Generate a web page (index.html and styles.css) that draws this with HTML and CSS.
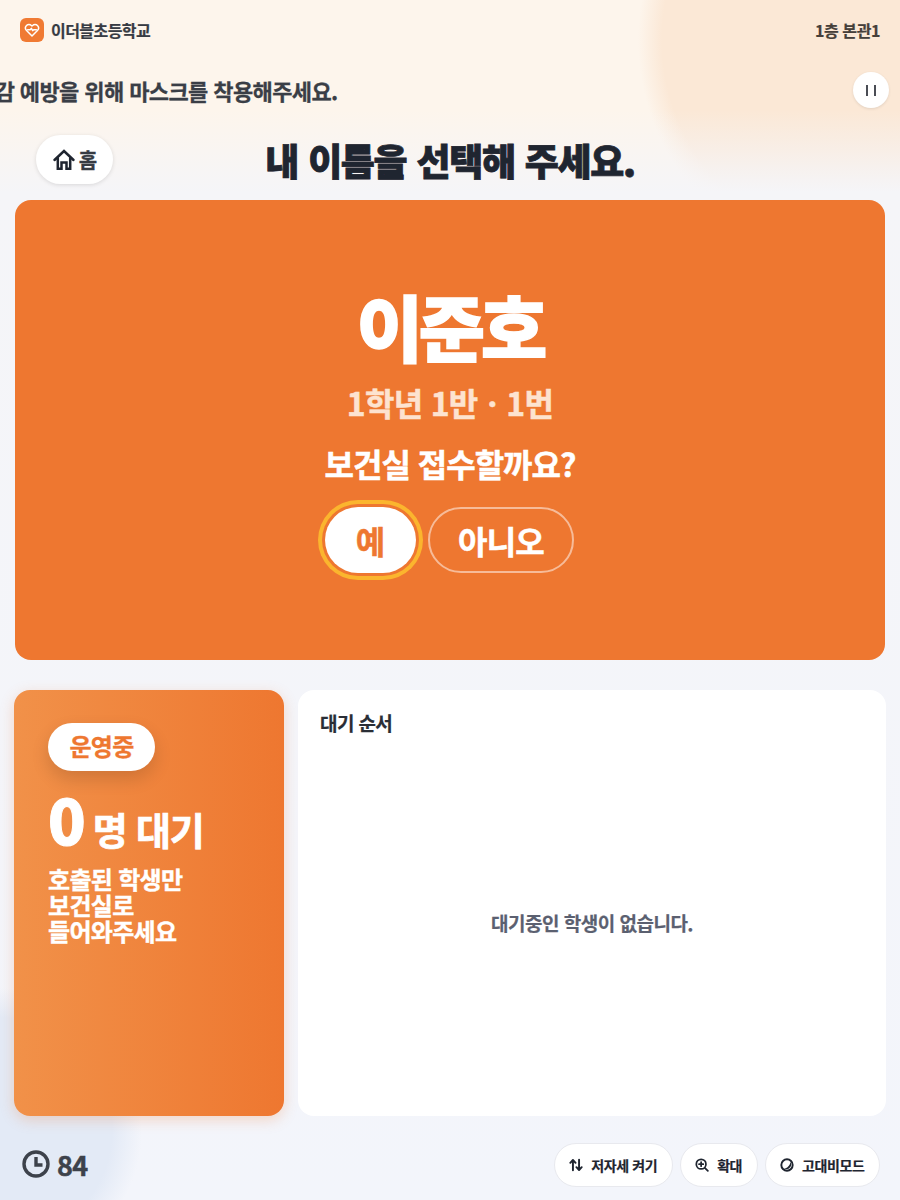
FILE: index.html
```html
<!doctype html>
<html lang="ko">
 <head>
  <meta charset="UTF-8">
  <link rel="stylesheet" href="styles.css">
  <title>보건실 접수</title>
 </head>
 <body>
  <main class="page">
   <header class="top">
    <div class="brand">
     <span class="logo">
      <svg width="16" height="16" viewBox="0 0 24 24" fill="none" stroke="#fff" stroke-width="2.200" stroke-linecap="round" stroke-linejoin="round"><path d="M12 21 3.800 12.600a5.300 5.300 0 0 1 0-7.400 5.100 5.100 0 0 1 7.300 0l.9.9.9-.9a5.100 5.100 0 0 1 7.300 0 5.300 5.300 0 0 1 0 7.400z"/><path d="M5.500 11.500h4l1.500-2 2 3.500 1.500-1.500h4"/></svg>
     </span>
     <span class="school">이더블초등학교</span>
    </div>
    <span class="place">1층 본관1</span>
   </header>

   <section class="notice">
    <div class="track">독감 예방을 위해 마스크를 착용해주세요.</div>
    <button class="pause"><i></i><i></i></button>
   </section>

   <section class="title-row">
    <button class="home">
     <svg width="24" height="24" viewBox="0 0 24 24" fill="none" stroke="#1f2530" stroke-width="2.500" stroke-linejoin="miter" stroke-linecap="round"><path d="M2.500 12 12 3l9.500 9"/><path d="M5.800 10v10.800h3.700V14.500h5v6.300h3.700V10"/></svg>
     <span>홈</span>
    </button>
    <h1>내 이름을 선택해 주세요.</h1>
   </section>

   <section class="confirm">
    <div class="name">이준호</div>
    <div class="grade">1학년 1반ㆍ1번</div>
    <div class="ask">보건실 접수할까요?</div>
    <div class="choices">
     <button class="yes">예</button>
     <button class="no">아니오</button>
    </div>
   </section>

   <section class="lower">
    <div class="status">
     <span class="badge">운영중</span>
     <div class="count"><b>0</b><span>명 대기</span></div>
     <p>호출된 학생만<br>보건실로<br>들어와주세요</p>
    </div>
    <div class="queue">
     <h2>대기 순서</h2>
     <div class="empty">대기중인 학생이 없습니다.</div>
    </div>
   </section>

   <footer class="bottom">
    <div class="timer">
     <svg width="30" height="30" viewBox="0 0 30 30" fill="none" stroke="#3d424b" stroke-width="3.400"><circle cx="15" cy="15" r="12"/><path d="M15 8v8h6.500"/></svg>
     <span>84</span>
    </div>
    <div class="tools">
     <button class="tool">
      <svg width="14" height="14" viewBox="0 0 16 16" fill="none" stroke="#1f2530" stroke-width="2.200" stroke-linecap="round" stroke-linejoin="round"><path d="M4.500 14V3M1.500 5.500l3-3.200 3 3.200"/><path d="M11.500 2v11M8.500 10.500l3 3.200 3-3.200"/></svg>
      <span>저자세 켜기</span>
     </button>
     <button class="tool">
      <svg width="14" height="14" viewBox="0 0 16 16" fill="none" stroke="#1f2530" stroke-width="2" stroke-linecap="round"><circle cx="7" cy="7" r="5.500"/><path d="m11.200 11.200 3.500 3.500M7 4.600v4.800M4.600 7h4.800"/></svg>
      <span>확대</span>
     </button>
     <button class="tool">
      <svg width="14" height="14" viewBox="0 0 16 16"><circle cx="8" cy="8" r="6.500" fill="none" stroke="#1f2530" stroke-width="2.200"/><path d="M12 4.500A5.500 5.500 0 0 1 4.500 12C8 12 11.500 8.500 12 4.500z" fill="#1f2530"/></svg>
      <span>고대비모드</span>
     </button>
    </div>
   </footer>
  </main>
 </body>
</html>
```

FILE: styles.css
```css
*{box-sizing:border-box;}
html,body{margin:0;padding:0;}
html{overflow:hidden;}
body{
    width:900px; height:1200px;
    overflow:hidden;
    background:
        radial-gradient(circle at 0 1130px,#e3eaf6 112px,rgba(227,234,246,0) 142px),
        linear-gradient(180deg,rgba(245,245,248,0) 110px,#f5f5f8 192px,#f3f5fb 100%),
        radial-gradient(circle at 870px 40px,#fbe8d6 208px,#fdf5ec 232px);
    font-family:"Noto Sans CJK KR","Noto Sans",sans-serif;
    color:#1f2530;
}
button{font-family:inherit;border:0;padding:0;cursor:pointer;}

.page{display:flex;flex-direction:column;height:1200px;overflow:hidden;}

.top{
    height:60px;
    padding:0 20px;
    display:flex;
    align-items:center;
    justify-content:space-between;
}
.brand{display:flex;align-items:center;gap:7px;}
.logo{
    width:24px; height:24px;
    border-radius:6px;
    background:#f07a33;
    display:flex;
    align-items:center;
    justify-content:center;
}
.school{font-size:16px;font-weight:700;color:#373b43;letter-spacing:-.55px;-webkit-text-stroke:.2px #373b43;}
.place{font-size:16px;font-weight:700;color:#463f3a;letter-spacing:-.4px;-webkit-text-stroke:.2px #463f3a;}

.notice{
    height:62px;
    display:flex;
    align-items:center;
    justify-content:space-between;
    padding-right:11px;
    padding-bottom:2px;
    overflow:hidden;
}
.track{
    font-size:22px;
    font-weight:700;
    color:#3a3e46;
    letter-spacing:-.6px;
    white-space:nowrap;
    margin-left:-25px;
    -webkit-text-stroke:.3px #3a3e46;
}
.pause{
    width:36px; height:36px;
    border-radius:50%;
    background:#fff;
    display:flex;
    align-items:center;
    justify-content:center;
    gap:6px;
    box-shadow:0 1px 3px rgba(0,0,0,.1);
}
.pause i{width:2px;height:11px;background:#4a4d55;}

.title-row{
    height:78px;
    position:relative;
    display:flex;
    align-items:center;
    justify-content:center;
    padding-bottom:2px;
}
.title-row h1{
    margin:0;
    font-size:37px;
    font-weight:900;
    letter-spacing:-1.300px;
    word-spacing:1px;
    color:#1f2530;
    -webkit-text-stroke:.8px #1f2530;
}
.home{
    position:absolute;
    left:36px; top:13px;
    width:77px; height:49px;
    border-radius:25px;
    background:#fff;
    display:flex;
    align-items:center;
    justify-content:center;
    gap:3px;
    box-shadow:0 1px 4px rgba(0,0,0,.12);
    font-size:20px;
    font-weight:700;
    color:#373b43;
    -webkit-text-stroke:.3px #373b43;
}

.confirm{
    height:460px;
    margin:0 15px;
    border-radius:16px;
    background:#ee7730;
    color:#fff;
    display:flex;
    flex-direction:column;
    align-items:center;
    padding-top:75px;
}
.name{font-size:72px;font-weight:900;line-height:100px;letter-spacing:-4px;-webkit-text-stroke:1.500px #fff;}
.grade{font-size:32px;font-weight:700;line-height:46px;margin-top:4px;color:#fde3d0;letter-spacing:-.7px;-webkit-text-stroke:.5px #fde3d0;}
.ask{font-size:32px;font-weight:700;line-height:46px;margin-top:15px;letter-spacing:-1px;-webkit-text-stroke:.5px #fff;}
.choices{display:flex;align-items:center;gap:12px;margin-top:21px;margin-right:1px;}
.yes{
    width:91px; height:66px;
    border-radius:33px;
    background:#fff;
    color:#ee7730;
    font-size:32px;
    font-weight:700;
    -webkit-text-stroke:.5px #ee7730;
    box-shadow:0 0 0 3px #ee7730,0 0 0 7px #fbb52e;
}
.no{
    width:146px; height:66px;
    border-radius:33px;
    background:transparent;
    color:#fff;
    font-size:32px;
    font-weight:700;
    letter-spacing:-.8px;
    -webkit-text-stroke:.5px #fff;
    border:2px solid rgba(255,255,255,.5);
}

.lower{
    margin:30px 14px 0;
    height:426px;
    display:flex;
    gap:14px;
}
.status{
    width:270px;
    border-radius:16px;
    background:linear-gradient(90deg,#f19149,#ee7730);
    box-shadow:0 4px 14px rgba(238,119,48,.25);
    color:#fff;
    padding:33px 34px;
}
.badge{
    display:block;
    width:107px; height:48px;
    line-height:46px;
    border-radius:24px;
    background:#fff;
    color:#ee7730;
    text-align:center;
    font-size:24px;
    font-weight:700;
    letter-spacing:-.8px;
    -webkit-text-stroke:.3px #ee7730;
    box-shadow:0 8px 18px rgba(0,0,0,.14);
}
.count{display:flex;align-items:baseline;gap:7px;margin-top:12px;height:70px;}
.count b{font-size:62px;font-weight:900;line-height:70px;-webkit-text-stroke:1px #fff;}
.count span{font-size:38px;font-weight:700;letter-spacing:-1.200px;-webkit-text-stroke:.7px #fff;}
.status p{margin:13px 0 0;font-size:24px;font-weight:700;line-height:26px;letter-spacing:-.7px;-webkit-text-stroke:.4px #fff;}

.queue{
    flex:1;
    border-radius:16px;
    background:#fff;
    padding:18px 22px;
    display:flex;
    flex-direction:column;
}
.queue h2{margin:0;font-size:19px;font-weight:700;line-height:30px;color:#2a2e36;letter-spacing:-.6px;-webkit-text-stroke:.2px #2a2e36;}
.empty{
    flex:1;
    display:flex;
    align-items:center;
    justify-content:center;
    font-size:19px;
    font-weight:700;
    color:#5b6070;
    letter-spacing:-.5px;
    padding-top:8px;
    -webkit-text-stroke:.2px #5b6070;
}

.bottom{
    flex:1;
    padding:12px 20px 0 21px;
    display:flex;
    align-items:center;
    justify-content:space-between;
}
.timer{display:flex;align-items:center;gap:6px;font-size:27px;font-weight:700;color:#3d424b;letter-spacing:-.7px;-webkit-text-stroke:.5px #3d424b;}
.tools{display:flex;gap:7px;margin-top:2px;}
.tool{
    height:44px;
    padding:0 14.500px;
    border-radius:22px;
    background:#fff;
    border:1px solid #e8e9ee;
    display:flex;
    align-items:center;
    gap:8px;
    font-size:14px;
    font-weight:700;
    color:#1f2530;
    letter-spacing:-.4px;
    -webkit-text-stroke:.2px #1f2530;
}
```
